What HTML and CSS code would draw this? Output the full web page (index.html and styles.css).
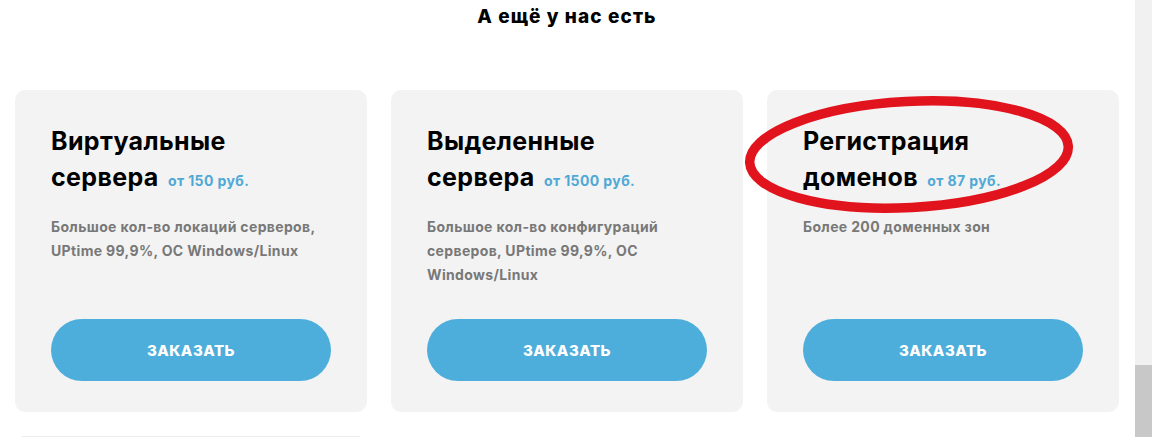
FILE: index.html
```html
<!DOCTYPE html>
<html lang="ru">
<head>
<meta charset="utf-8">
<title>А ещё у нас есть</title>
<link rel="stylesheet" href="styles.css">
</head>
<body>
<div class="page">
  <main class="main">
    <h2 class="heading">А ещё у нас есть</h2>
    <div class="cards">
      <section class="card">
        <h3 class="card-title">Виртуальные сервера <span class="price">от 150 руб.</span></h3>
        <p class="card-desc">Большое кол-во локаций серверов, UPtime 99,9%, ОС Windows/Linux</p>
        <a class="btn" href="#">ЗАКАЗАТЬ</a>
      </section>
      <section class="card">
        <h3 class="card-title">Выделенные сервера <span class="price">от 1500 руб.</span></h3>
        <p class="card-desc">Большое кол-во конфигураций серверов, UPtime 99,9%, ОС Windows/Linux</p>
        <a class="btn" href="#">ЗАКАЗАТЬ</a>
      </section>
      <section class="card">
        <h3 class="card-title">Регистрация доменов <span class="price">от 87 руб.</span></h3>
        <p class="card-desc">Более 200 доменных зон</p>
        <a class="btn" href="#">ЗАКАЗАТЬ</a>
      </section>
    </div>
    <div class="next-row">
      <div class="next-card"></div>
    </div>
  </main>
  <div class="scrollbar"><div class="thumb"></div></div>
  <svg class="mark" width="1152" height="437" viewBox="0 0 1152 437" aria-hidden="true">
    <ellipse cx="909" cy="154.5" rx="159.5" ry="53" transform="rotate(-3 909 154.5)" fill="none" stroke="#e1131d" stroke-width="9.5"/>
  </svg>
</div>
</body>
</html>
```
FILE: styles.css
```css
* { box-sizing: border-box; }
html, body { margin: 0; padding: 0; }
body {
  background: #fff;
  font-family: Inter, "Noto Sans", "Liberation Sans", sans-serif;
  color: #000;
  overflow: hidden;
}
.page {
  position: relative;
  display: flex;
  width: 1152px;
  height: 437px;
  overflow: hidden;
}
.main {
  flex: 1;
  display: flex;
  flex-direction: column;
  padding-left: 15px;
}
.heading {
  margin: 5px 0 0;
  width: 1104px;
  text-align: center;
  font-size: 19px;
  line-height: 24px;
  font-weight: 800;
  letter-spacing: 1.1px;
}
.cards {
  margin-top: 61px;
  width: 1104px;
  display: grid;
  grid-template-columns: 352px 352px 352px;
  column-gap: 24px;
}
.card {
  background: #f3f3f3;
  border-radius: 10px;
  height: 322px;
  padding: 33px 36px 31px;
  display: flex;
  flex-direction: column;
}
.card-title {
  margin: 0;
  font-size: 25px;
  line-height: 36px;
  font-weight: 700;
  letter-spacing: 0.35px;
  width: 240px;
}
.price {
  font-size: 14px;
  color: #4fa9d6;
  font-weight: 700;
  letter-spacing: 0.4px;
  margin-left: 3px;
}
.card-desc {
  margin: 16px 0 0;
  font-size: 14px;
  line-height: 24px;
  font-weight: 700;
  color: #787878;
  letter-spacing: 0.35px;
}
.btn {
  margin-top: auto;
  width: 280px;
  height: 62px;
  border-radius: 31px;
  background: #4daedb;
  color: #fff;
  text-decoration: none;
  font-weight: 800;
  font-size: 15px;
  letter-spacing: 0.5px;
  display: flex;
  align-items: center;
  justify-content: center;
}
.next-row {
  margin-top: 24px;
  width: 1104px;
  display: grid;
  grid-template-columns: 352px 352px 352px;
  column-gap: 24px;
}
.next-card {
  margin: 0 7px;
  border-top: 1px solid #ececec;
  height: 10px;
}
.scrollbar {
  width: 17px;
  background: #f1f1f1;
  display: flex;
  flex-direction: column;
  justify-content: flex-end;
}
.thumb {
  height: 72px;
  background: #c8c8c8;
}
.mark {
  position: absolute;
  left: 0;
  top: 0;
  pointer-events: none;
}
```
